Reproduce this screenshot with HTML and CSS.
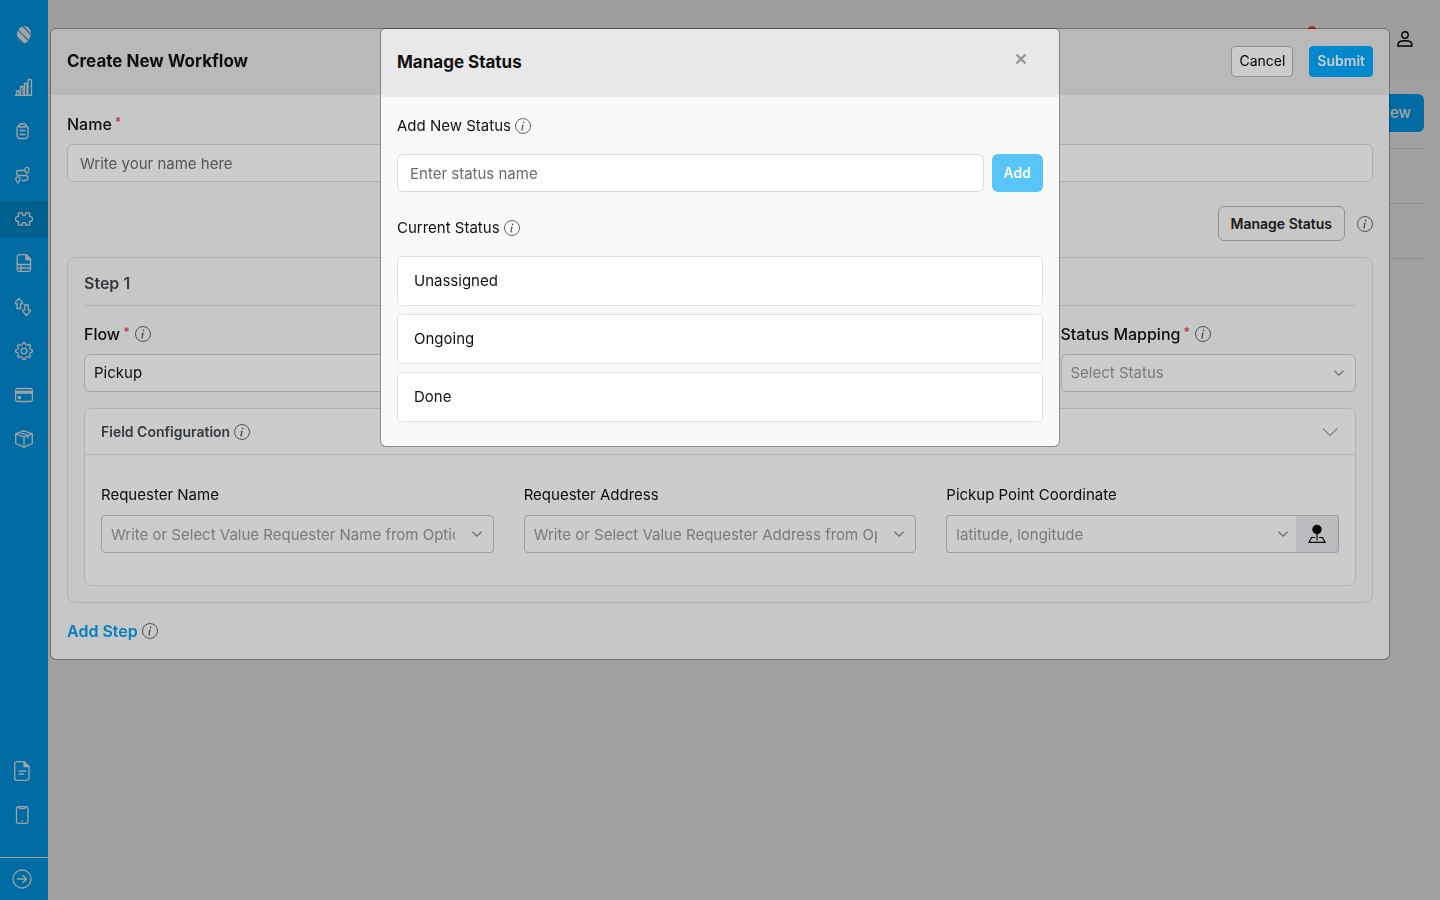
FILE: index.html
```html
<!DOCTYPE html>
<html lang="en">

<head>
    <meta charset="UTF-8">
    <meta name="viewport" content="width=device-width, initial-scale=1.0">
    <title>Create New Workflow</title>
    <link rel="stylesheet" href="styles.css">
</head>

<body>
    <!-- shared icons -->
    <svg class="sprite" aria-hidden="true">
        <symbol id="info" viewBox="0 0 16 16">
            <circle cx="8" cy="8" r="7.5" fill="none" stroke="currentColor" stroke-width="0.9" />
            <path fill="currentColor" d="M8.7 6.6l-2.2.3-.1.35.45.1c.3.07.35.17.29.46l-.74 3.4c-.19.85.1 1.2.7 1.2.55 0 1.15-.28 1.45-.65l.08-.35c-.2.18-.5.28-.7.28-.28 0-.36-.2-.29-.53z" />
            <circle cx="8.6" cy="4.4" r="0.8" fill="currentColor" />
        </symbol>
        <symbol id="chevron" viewBox="0 0 12 12">
            <path d="M1.5 3.8L6 8.2l4.5-4.4" fill="none" stroke="currentColor" stroke-width="1.2" />
        </symbol>
    </svg>

    <div class="layout">
        <nav class="sidebar">
            <a class="logo" href="#" aria-label="Home">
                <svg width="16" height="18" viewBox="0 0 16 18">
                    <clipPath id="logo-shape">
                        <path d="M8.500.3C12 .3 15 3 15 7.500c0 4-2.500 7.500-6 10C5.500 17 1 13.500 1 8.500 1 3.500 4.500.3 8.500.3z" />
                    </clipPath>
                    <g clip-path="url(#logo-shape)">
                        <rect width="16" height="18" fill="currentColor" />
                        <path class="gap" d="M5 -1.500L18 11.500M-1 1L16 18M-2 8L9 19" />
                    </g>
                </svg>
            </a>
            <a class="nav-item" href="#" aria-label="Dashboard">
                <svg width="18" height="18" viewBox="1 0 18 18">
                    <path d="M1 17.300h17M2.500 17v-4H5v4M6.500 17V8.500H9V17M10.500 17V5.500H13V17M14 17V2.500q0-1 1-1h1.500q1 0 1 1V17" />
                </svg>
            </a>
            <a class="nav-item" href="#" aria-label="Tasks">
                <svg width="18" height="18" viewBox="1 0 18 18">
                    <path d="M5.500 3.500H5L3 5.500v9l2 2h7l2-2v-9l-2-2h-.5M5.500 2h6v3h-6zM5.500 8.500h6M5.500 12.500h6" />
                </svg>
            </a>
            <a class="nav-item" href="#" aria-label="Routes">
                <svg width="18" height="18" viewBox="1 0 18 18">
                    <path d="M11 4.500H5a2.500 2.500 0 0 0 0 5h6.500a2.500 2.500 0 0 1 0 5H7.500M13 7.500C11.300 5.700 10.800 4.800 10.800 3.500a2 2 0 0 1 4.200 0c0 1.300-.5 2.200-2 4zM4 17c-1.700-1.800-2.200-2.700-2.200-4a2 2 0 0 1 4.200 0c0 1.300-.5 2.200-2 4z" />
                </svg>
            </a>
            <a class="nav-item active" href="#" aria-label="Workflow">
                <svg width="18" height="18" viewBox="0 0 18 18">
                    <path d="M3.500 6.500V2.800h4C6.900 4.700 7.700 5.500 9 5.500s2.100-.8 1.500-2.700h4v3.700c1.800-.5 3 .7 3 2.500s-1.200 3-3 2.500v3.700h-4c.6-1.900-.2-2.700-1.500-2.700s-2.100.8-1.500 2.700h-4v-3.700c-1.800.5-3-.7-3-2.500s1.200-3 3-2.500z" />
                </svg>
            </a>
            <a class="nav-item" href="#" aria-label="Reports">
                <svg width="18" height="18" viewBox="0 0 18 18">
                    <path d="M4 .7h7.500L15.500 5v10.500q0 1.800-1.800 1.800H4q-1.800 0-1.800-1.800v-13Q2.200.7 4 .7zM2.200 10.500h13.300M2.200 14h13.300M6 10.500v6.800" />
                    <path class="fill" d="M11 .7L15.500 5.500H11z" />
                </svg>
            </a>
            <a class="nav-item" href="#" aria-label="Transfers">
                <svg width="18" height="18" viewBox="1 0 18 18">
                    <path d="M4.800.5L8.500 4.500v1.300H6.600v4.700H3V5.800H1.200V4.500zM12.500 17.500L8.800 13.500v-1.300h1.900V7h3.600v5.200h1.900v1.300z" />
                </svg>
            </a>
            <a class="nav-item" href="#" aria-label="Settings">
                <svg width="18" height="18" viewBox="0 0 18 18">
                    <path d="M7.300 2.800L8 .7h2l.7 2.100 1.500.6 2-1 1.400 1.400-1 2 .6 1.500 2.100.7v2l-2.100.7-.6 1.500 1 2-1.400 1.400-2-1-1.500.6-.7 2.100H8l-.7-2.100-1.500-.6-2 1-1.400-1.400 1-2-.6-1.500L.7 10V8l2.100-.7.6-1.500-1-2 1.400-1.400 2 1z" />
                    <circle cx="9" cy="9" r="2.800" />
                </svg>
            </a>
            <a class="nav-item" href="#" aria-label="Billing">
                <svg width="18" height="18" viewBox="0 0 18 18">
                    <rect x="0.600" y="2.500" width="16.800" height="13" rx="1.800" />
                    <path d="M.6 5.500h16.800M.6 7h16.800" />
                    <circle class="fill" cx="4.500" cy="11.500" r="1.200" />
                </svg>
            </a>
            <a class="nav-item" href="#" aria-label="Packages">
                <svg width="18" height="18" viewBox="0 0 18 18">
                    <path d="M9 .8l8.300 3v9.500L9 17.300.7 13.300V3.800zM.7 3.800L9 7l8.300-3.200M9 7v10.300M4.500 2.400l8.500 3v3" />
                </svg>
            </a>

            <div class="nav-bottom">
                <a class="nav-item" href="#" aria-label="Documents">
                    <svg width="18" height="20" viewBox="0 0 18 20">
                        <path d="M3.500.7h7.500l5 4.800v12q0 1.800-1.800 1.800H3.500q-1.800 0-1.800-1.800v-15Q1.700.7 3.500.7zM5.500 10H13M5.500 13H11" />
                        <path class="fill" d="M11 .7l5 4.800h-5z" />
                    </svg>
                </a>
                <a class="nav-item" href="#" aria-label="Mobile app">
                    <svg width="18" height="18" viewBox="0 0 18 18">
                        <rect x="3.500" y="0.600" width="11.500" height="16.800" rx="2" />
                        <path d="M6 .8q0 1.700 1.500 1.700h3.500q1.500 0 1.500-1.700M8.500 15.200h1.500" />
                    </svg>
                </a>
            </div>
            <a class="nav-expand" href="#" aria-label="Expand menu">
                <svg width="20" height="20" viewBox="0 0 20 20">
                    <circle cx="10" cy="10" r="9" />
                    <path d="M5 10h9.500M10.500 6l4 4-4 4" />
                </svg>
            </a>
        </nav>

        <div class="page">
            <header class="topbar">
                <div class="bell"></div>
                <svg width="16" height="16" viewBox="0 0 16 16" fill="none" stroke="currentColor" stroke-width="1.400">
                    <circle cx="8" cy="4" r="3.200" />
                    <path d="M1 15v-1.500C1 11 3.500 9.800 8 9.800s7 1.200 7 3.700V15z" />
                </svg>
            </header>
            <main class="content">
                <button class="btn-new" type="button">New</button>
                <div class="list">
                    <div class="list-row"></div>
                    <div class="list-row"></div>
                </div>
            </main>
        </div>
    </div>

    <div class="overlay">
        <section class="modal modal-workflow">
            <header class="modal-header">
                <h2>Create New Workflow</h2>
                <div class="actions">
                    <button class="btn-small" type="button">Cancel</button>
                    <button class="btn-small btn-submit" type="button">Submit</button>
                </div>
            </header>
            <div class="modal-body">
                <div class="field">
                    <label class="label strong" for="name">Name<span class="required">*</span></label>
                    <input class="control" id="name" type="text" placeholder="Write your name here">
                </div>
                <div class="manage">
                    <button class="btn-manage" type="button">Manage Status</button>
                    <svg class="info"><use href="#info" /></svg>
                </div>

                <div class="step">
                    <h3 class="step-title">Step 1</h3>
                    <div class="step-row">
                        <div class="field flow">
                            <label class="label strong" for="flow">Flow<span class="required">*</span><svg class="info"><use href="#info" /></svg></label>
                            <div class="picker">
                                <select class="control" id="flow">
                                    <option>Pickup</option>
                                </select>
                            </div>
                        </div>
                        <div class="field">
                            <label class="label strong" for="mapping">Status Mapping<span class="required">*</span><svg class="info"><use href="#info" /></svg></label>
                            <div class="picker">
                                <select class="control muted" id="mapping">
                                    <option>Select Status</option>
                                </select>
                                <svg class="chevron"><use href="#chevron" /></svg>
                            </div>
                        </div>
                    </div>

                    <div class="config">
                        <div class="config-header">
                            <h4>Field Configuration</h4>
                            <svg class="info"><use href="#info" /></svg>
                            <svg class="toggle" width="16" height="16" viewBox="0 0 16 16">
                                <path d="M.8 4.500L8 11.500l7.200-7" fill="none" stroke="currentColor" />
                            </svg>
                        </div>
                        <div class="config-body">
                            <div class="field">
                                <label class="label" for="req-name">Requester Name</label>
                                <div class="picker">
                                    <input class="control outline" id="req-name" type="text" placeholder="Write or Select Value Requester Name from Options">
                                    <svg class="chevron"><use href="#chevron" /></svg>
                                </div>
                            </div>
                            <div class="field">
                                <label class="label" for="req-address">Requester Address</label>
                                <div class="picker">
                                    <input class="control outline" id="req-address" type="text" placeholder="Write or Select Value Requester Address from Options">
                                    <svg class="chevron"><use href="#chevron" /></svg>
                                </div>
                            </div>
                            <div class="field">
                                <label class="label" for="coordinate">Pickup Point Coordinate</label>
                                <div class="group">
                                    <div class="picker">
                                        <input class="control outline" id="coordinate" type="text" placeholder="latitude, longitude">
                                        <svg class="chevron"><use href="#chevron" /></svg>
                                    </div>
                                    <button class="btn-map" type="button" aria-label="Pick on map">
                                        <svg width="20" height="20" viewBox="0 0 20 20">
                                            <circle cx="10" cy="5.500" r="4.700" />
                                            <path d="M10 9v7.500M8 13.500H4.500L2 18.300h16l-2.500-4.800H12" fill="none" stroke="#000" stroke-width="1.200" />
                                        </svg>
                                    </button>
                                </div>
                            </div>
                        </div>
                    </div>
                </div>

                <div class="add-step">
                    <a href="#">Add Step</a>
                    <svg class="info"><use href="#info" /></svg>
                </div>
            </div>
        </section>
    </div>

    <div class="overlay">
        <section class="modal modal-status">
            <header class="modal-header">
                <h2>Manage Status</h2>
                <button class="close" type="button" aria-label="Close">
                    <svg width="12" height="12" viewBox="0 0 12 12">
                        <path d="M1.500 1.500l9 9M10.500 1.500l-9 9" stroke="currentColor" stroke-width="2.400" />
                    </svg>
                </button>
            </header>
            <div class="modal-body">
                <label class="label" for="status">Add New Status<svg class="info"><use href="#info" /></svg></label>
                <div class="status-form">
                    <input class="control" id="status" type="text" placeholder="Enter status name">
                    <button class="btn-add" type="button">Add</button>
                </div>
                <div class="label">Current Status<svg class="info"><use href="#info" /></svg></div>
                <ul class="status-list">
                    <li>Unassigned</li>
                    <li>Ongoing</li>
                    <li>Done</li>
                </ul>
            </div>
        </section>
    </div>
</body>

</html>
```
FILE: styles.css
```css
* {
    box-sizing: border-box;
}

body {
    margin: 0;
    font-family: Inter, "Liberation Sans", sans-serif;
    font-size: 15px;
    line-height: 24px;
    color: #111;
}

h2, h3, h4, ul {
    margin: 0;
    padding: 0;
}

svg {
    flex-shrink: 0;
}

button, input, select {
    font: inherit;
    color: inherit;
}

.sprite {
    position: absolute;
    width: 0;
    height: 0;
}

/* page behind the modals */
.layout {
    display: flex;
    min-height: 100vh;
}

.sidebar {
    display: flex;
    flex-direction: column;
    gap: 8px;
    width: 48px;
    background: #00aaff;
    color: #fff;
}

.sidebar a {
    display: flex;
    align-items: center;
    justify-content: center;
    color: #fff;
}

.sidebar .logo {
    height: 61px;
    padding-top: 9px;
}

.logo .gap {
    stroke: #00aaff;
    stroke-width: 1.2;
}

.nav-item {
    height: 36px;
}

.nav-item.active {
    background: #0099e3;
}

.nav-item svg, .nav-expand svg {
    fill: none;
    stroke: currentColor;
    stroke-width: 1.3;
}

.nav-item .fill {
    fill: currentColor;
}

.nav-bottom {
    display: flex;
    flex-direction: column;
    gap: 8px;
    margin-top: auto;
    margin-bottom: 16px;
    padding-right: 4px;
}

.nav-expand {
    height: 43px;
    padding-right: 4px;
    border-top: 1px solid #fff;
}

.page {
    flex: 1;
    background: #fdfdfd;
}

.topbar {
    display: flex;
    align-items: center;
    justify-content: flex-end;
    gap: 80px;
    height: 78px;
    padding-right: 27px;
    background: #f8f8f8;
    border-bottom: 1px solid #f2f2f2;
    color: #000;
}

.bell {
    width: 10px;
    height: 10px;
    margin-bottom: 16px;
    border-radius: 50%;
    background: #ff4d4f;
}

.content {
    display: flex;
    flex-direction: column;
    padding: 16px;
}

.btn-new {
    align-self: flex-end;
    height: 38px;
    padding: 0 13px;
    border: 0;
    border-radius: 6px;
    background: #00aaff;
    color: #fff;
    font-weight: 500;
}

.list {
    margin-top: 16px;
    border-top: 1px solid #dcdfe3;
}

.list-row {
    height: 55px;
    border-bottom: 1px solid #dcdfe3;
}

/* modals */
.overlay {
    position: fixed;
    inset: 0;
    padding: 28px 50px;
    overflow: auto;
    background: rgba(0, 0, 0, 0.2);
}

.modal {
    margin: 0 auto;
    overflow: hidden;
    border: 1px solid rgba(0, 0, 0, 0.3);
    border-radius: 6px;
    background: #f9f9f9;
    background-clip: padding-box;
}

.modal-status {
    max-width: 680px;
}

.modal-header {
    display: flex;
    align-items: center;
    justify-content: space-between;
    height: 66px;
    padding: 0 16px 2px;
    background: #e8e8e8;
}

.modal-status .modal-header {
    height: 68px;
}

.modal-header h2 {
    font-size: 17px;
    font-weight: 700;
}

.modal-body {
    padding: 17px 16px 16px;
}

.modal-status .modal-body {
    padding-bottom: 24px;
}

.actions {
    display: flex;
    gap: 16px;
}

.btn-small {
    height: 31px;
    padding: 0 7px;
    border: 1px solid #b5b5b5;
    border-radius: 4px;
    background: #fff;
    color: #000;
    font-size: 14px;
}

.btn-submit {
    border-color: #00aaff;
    background: #00aaff;
    color: #fff;
    font-weight: 600;
}

.close {
    display: flex;
    padding: 8px;
    margin: 0 8px 6px 0;
    border: 0;
    background: none;
    color: #999;
}

.field {
    min-width: 0;
}

.label {
    display: flex;
    align-items: center;
    margin-bottom: 8px;
}

.strong {
    font-size: 16px;
    font-weight: 500;
}

.required {
    margin-left: 3px;
    align-self: flex-start;
    line-height: 20px;
    font-size: 12px;
    font-weight: 600;
    color: #f0483e;
}

.info {
    width: 16px;
    height: 16px;
    margin-left: 4px;
    color: #555;
}

.required + .info {
    margin-left: 5px;
}

.control {
    display: block;
    width: 100%;
    height: 38px;
    padding: 0 12px;
    border: 1px solid #dadada;
    border-radius: 6px;
    background: #fff;
    appearance: none;
    outline: none;
}

.control::placeholder {
    color: #6c6c6c;
    opacity: 1;
}

.picker {
    position: relative;
    flex: 1;
    min-width: 0;
}

.picker .control {
    padding: 0 38px 0 9px;
    border-color: #d0d0d0;
}

.picker .outline {
    border-color: #c4c4c4;
    border-radius: 4px;
}

.picker .control::placeholder, .muted {
    color: #999;
}

.chevron {
    position: absolute;
    top: 13px;
    right: 11px;
    width: 12px;
    height: 12px;
    color: #8a8a8a;
}

.manage {
    display: flex;
    align-items: center;
    justify-content: flex-end;
    gap: 8px;
    margin: 24px 0 16px;
}

.btn-manage {
    height: 35px;
    padding: 0 12px;
    border: 1px solid #b5b5b5;
    border-radius: 6px;
    background: #f9f9f9;
    font-size: 14px;
    font-weight: 600;
    color: #222;
}

.step {
    padding: 13px 16px 16px;
    border: 1px solid #dde0e3;
    border-radius: 8px;
    background: #f7f9fa;
}

.step-title {
    padding-bottom: 10px;
    border-bottom: 1px solid #dde0e3;
    font-size: 16px;
    font-weight: 600;
    color: #444a50;
}

.step-row {
    display: grid;
    grid-template-columns: repeat(4, minmax(0, 1fr));
    gap: 30px;
    margin: 16px 0;
}

.flow {
    grid-column: span 3;
}

.config {
    border: 1px solid #dde0e3;
    border-radius: 8px;
    background: #fff;
}

.config-header {
    display: flex;
    align-items: center;
    height: 46px;
    padding: 0 16px;
    border-bottom: 1px solid #dde0e3;
}

.config-header h4 {
    font-size: 14px;
    font-weight: 600;
    color: #444a50;
}

.toggle {
    margin-left: auto;
    margin-right: 1px;
    color: #666;
}

.config-body {
    display: grid;
    grid-template-columns: repeat(3, minmax(0, 1fr));
    gap: 30px;
    padding: 28px 16px 32px;
}

.group {
    display: flex;
}

.group .outline {
    border-right: 0;
    border-radius: 4px 0 0 4px;
}

.group .chevron {
    right: 7px;
}

.btn-map {
    display: flex;
    align-items: center;
    justify-content: center;
    width: 43px;
    padding: 0;
    border: 1px solid #c4c4c4;
    border-left: 0;
    border-radius: 0 4px 4px 0;
    background: #e9ecef;
}

.add-step {
    display: flex;
    align-items: center;
    margin-top: 16px;
}

.add-step a {
    color: #00a0f0;
    font-size: 16px;
    font-weight: 600;
    text-decoration: none;
}

.status-form {
    display: flex;
    gap: 8px;
    margin: 16px 0 24px;
}

.btn-add {
    height: 38px;
    padding: 0 12px;
    border: 0;
    border-radius: 6px;
    background: #58c5f8;
    color: #fff;
    font-size: 14px;
    font-weight: 600;
}

.status-list {
    display: flex;
    flex-direction: column;
    gap: 8px;
    margin-top: 16px;
    list-style: none;
}

.status-list li {
    padding: 12px 16px;
    border: 1px solid #dfe2e5;
    border-radius: 4px;
    background: #fff;
}
```
